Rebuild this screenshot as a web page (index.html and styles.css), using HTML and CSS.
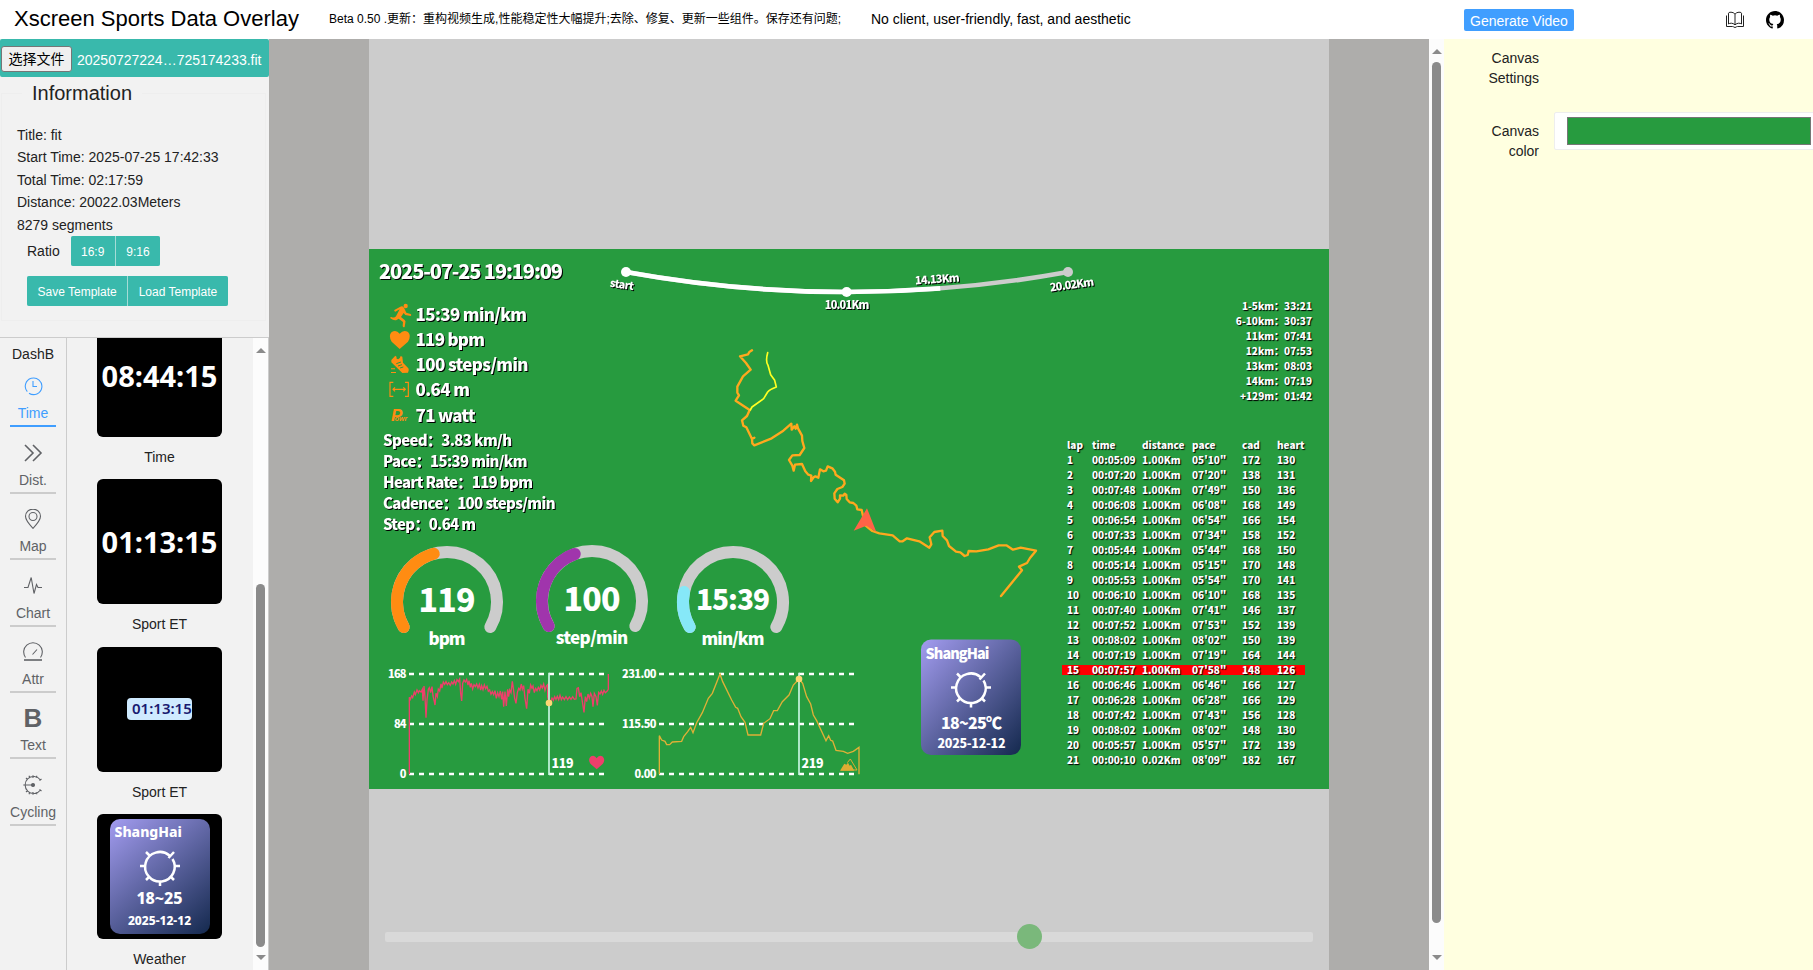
FILE: index.html
```html
<!DOCTYPE html>
<html lang="zh">
<head>
<meta charset="utf-8">
<title>Xscreen Sports Data Overlay</title>
<link rel="stylesheet" href="styles.css">
</head>
<body>
<header class="topbar">
  <h1 class="brand">Xscreen Sports Data Overlay</h1>
  <span class="beta">Beta 0.50 .更新：重构视频生成,性能稳定性大幅提升;去除、修复、更新一些组件。保存还有问题;</span>
  <span class="tagline">No client, user-friendly, fast, and aesthetic</span>
  <button class="generate">Generate Video</button>
  <svg class="book" viewBox="0 0 20 18" width="20" height="18" fill="none" stroke="#222" stroke-width="1"><path d="M10 3.2Q8.5 1.2 6 1.2T3.500 2.200V13Q4.500 12.200 6.300 12.200T10 13.800Q11.900 12.200 13.700 12.200T16.500 13V2.200Q16.500 1.200 14 1.200T10 3.200V13.800M1.500 4.500V15.500H7.500Q8.500 15.500 9 16.300H11Q11.500 15.500 12.500 15.500H18.500V4.500"/></svg>
  <svg class="github" viewBox="0 0 16 16" width="18" height="18"><path d="M8 0C3.580 0 0 3.580 0 8c0 3.540 2.290 6.530 5.470 7.590.4.070.55-.17.55-.38 0-.19-.010-.82-.010-1.490-2.010.37-2.530-.49-2.690-.94-.090-.23-.48-.94-.82-1.130-.28-.15-.68-.52-.010-.53.63-.010 1.080.58 1.230.82.72 1.210 1.870.87 2.330.66.070-.52.28-.87.51-1.070-1.780-.2-3.640-.89-3.640-3.950 0-.87.31-1.590.82-2.150-.080-.2-.36-1.020.080-2.120 0 0 .67-.21 2.200.82a7.600 7.600 0 0 1 4 0c1.530-1.040 2.200-.82 2.200-.82.44 1.100.16 1.920.080 2.120.51.56.82 1.270.82 2.150 0 3.070-1.870 3.750-3.650 3.950.29.25.54.73.54 1.480 0 1.070-.010 1.930-.010 2.200 0 .21.15.46.55.38A8.010 8.010 0 0 0 16 8c0-4.420-3.580-8-8-8z"/></svg>
</header>
<main class="workspace">
  <aside class="left">
    <div class="file-row"><span class="file-btn">选择文件</span><span class="file-name">20250727224…725174233.fit</span></div>
    <fieldset class="info">
      <legend>Information</legend>
      <p>Title: fit</p>
      <p>Start Time: 2025-07-25 17:42:33</p>
      <p>Total Time: 02:17:59</p>
      <p>Distance: 20022.03Meters</p>
      <p>8279 segments</p>
      <div class="btn-row ratio"><span>Ratio</span><div class="btns"><button>16:9</button><button>9:16</button></div></div>
      <div class="btn-row"><div class="btns"><button>Save Template</button><button>Load Template</button></div></div>
    </fieldset>
    <div class="library">
      <nav class="tabs">
        <div class="dash">DashB</div>
        <a class="tab active"><svg viewBox="0 0 20 20" width="20" height="20"><path d="M4.300 15.700A8.300 8.300 0 1 1 6 17.200M10 5V10.500H14"/></svg><span>Time</span></a>
        <a class="tab"><svg viewBox="0 0 20 20" width="20" height="20"><path class="thick" d="M2 2L10 10L2 18M10 2L18 10L10 18"/></svg><span>Dist.</span></a>
        <a class="tab"><svg viewBox="0 0 20 20" width="20" height="20"><path d="M10 19.300Q2.500 11.500 2.500 7.300A7.500 7.200 0 0 1 17.500 7.300Q17.500 11.500 10 19.300Z"/><circle cx="10" cy="7.500" r="4"/></svg><span>Map</span></a>
        <a class="tab"><svg viewBox="0 0 20 20" width="20" height="20"><path d="M1 11.500H5L8.200 1.500L11 17.500L13.500 8.500L15 11.500H19"/></svg><span>Chart</span></a>
        <a class="tab"><svg viewBox="0 0 20 20" width="20" height="20"><path d="M2.500 15.500A9.300 9.300 0 1 1 17.500 15.500M9.500 12.500L14 7.500"/><path class="thick" d="M1 18H19"/></svg><span>Attr</span></a>
        <a class="tab"><b>B</b><span>Text</span></a>
        <a class="tab"><svg viewBox="0 0 20 20" width="20" height="20"><path d="M17.500 5A8.500 8.500 0 1 0 17.500 15M3 10H10M10 .2V3M10 17V19.800M.3 10H3M3 3L4.500 4.500M3 17L4.500 15.500M6 .8L6.800 2.800M6 19.200L6.800 17.200M14 .8L13.200 2.800M14 19.200L13.200 17.200M18.500 4L16.500 5.500M18.500 16L16.500 14.500"/><circle class="dot" cx="10" cy="10" r="1.500"/></svg><span>Cycling</span></a>
      </nav>
      <div class="cards">
        <div class="thumb first"><b>08:44:15</b></div><div class="cap">Time</div>
        <div class="thumb"><b>01:13:15</b></div><div class="cap">Sport ET</div>
        <div class="thumb"><span class="chip">01:13:15</span></div><div class="cap">Sport ET</div>
        <div class="thumb">
          <div class="weather">
            <div class="city">ShangHai</div>
            <svg viewBox="0 0 40 40" width="40" height="40"><path d="M29.500 9.500A14.800 14.800 0 1 0 32.500 13M28.500 12L34 6M20 35V40M0 20H5M35 20H40M6 6L9.500 9.500M6 34L9.500 30.500M34 34L30.500 30.500"/></svg>
            <div class="deg">18~25</div><div class="date">2025-12-12</div>
          </div>
        </div><div class="cap">Weather</div>
      </div>
      <div class="scroll small"><i class="up"></i><i class="bar"></i><i class="down"></i></div>
    </div>
  </aside>
  <section class="stage">
    <div class="board">
      <div class="canvas">
        <svg class="scene" viewBox="0 0 960 540" width="960" height="540">
          <defs><linearGradient id="wx" x1="0" y1="0" x2="1" y2="1"><stop offset="0" stop-color="#a39cf0"/><stop offset="1" stop-color="#14294e"/></linearGradient></defs>
          <g class="shadow">
            <text x="10" y="30" font-size="20" textLength="184">2025-07-25 19:19:09</text>
            <g font-size="17">
              <text x="46.500" y="72" textLength="111.500">15:39 min/km</text>
              <text x="46.500" y="97" textLength="69.500">119 bpm</text>
              <text x="46.500" y="122" textLength="113">100 steps/min</text>
              <text x="46.500" y="147" textLength="54.500">0.64 m</text>
              <text x="46.500" y="173" textLength="60">71 watt</text>
            </g>
            <g font-size="15">
              <text x="14" y="197" textLength="129">Speed：3.83 km/h</text>
              <text x="14" y="218" textLength="144.500">Pace：15:39 min/km</text>
              <text x="14" y="239" textLength="150">Heart Rate：119 bpm</text>
              <text x="14" y="260" textLength="172.500">Cadence：100 steps/min</text>
              <text x="14" y="281" textLength="93">Step：0.64 m</text>
            </g>
          </g>
          <!-- metric icons -->
          <g fill="#ff8c12">
            <g transform="translate(-4 -9) scale(.33333)">
              <circle cx="122" cy="198" r="6.500"/>
              <path d="M88 210L106 200Q112 197 117 203L124 218L137 222Q141 225 137 228L121 225L116 219L108 231L119 240Q123 244 121 248L119 261Q114 264 113 258L114 246L101 236L96 239Q89 244 76 235Q74 231 79 231Q88 235 93 229L104 208L91 215Q86 214 88 210Z"/>
              <path d="M104 327L80 305Q69 287 80 276Q94 268 104 281Q115 268 129 276Q140 287 129 305Z"/>
              <path d="M79 360L91 347Q96 349 95 356Q104 361 107 348L112 350L114 368L130 385Q134 392 129 398L112 399L79 367ZM78 385H90V388H78ZM78 396H93V399H78Z"/>
              <path class="cut" d="M94 371L108 366M99 378L111 374M105 384L115 381"/>
              <path class="line" d="M85 427H75V469H85M120 427H130V469H120M84 448H121M90 442L84 448L90 454M115 442L121 448L115 454"/>
            </g>
            <text class="power" x="22" y="172" font-size="17">P<tspan font-size="7" dx="-7.500">owr</tspan></text>
          </g>
          <!-- distance progress -->
          <g transform="translate(231 -9) scale(.33333)" fill="none" stroke-width="14">
            <path stroke="#ccc" d="M78 96Q740 216 1404 96"/>
            <path stroke="#fff" pathLength="100" stroke-dasharray="71 100" d="M78 96Q740 216 1404 96"/>
            <g stroke="none"><circle cx="78" cy="96" r="15" fill="#fff"/><circle cx="740" cy="156" r="15" fill="#fff"/><circle cx="1404" cy="96" r="15" fill="#ccc"/></g>
          </g>
          <g class="shadow" font-size="11" text-anchor="middle">
            <text transform="translate(252.500 39.500) rotate(8)" textLength="24">start</text>
            <text x="478" y="59.500" textLength="44.500">10.01Km</text>
            <text transform="translate(568.500 34) rotate(-4)" textLength="44.500">14.13Km</text>
            <text transform="translate(703.500 39.500) rotate(-8)" textLength="44.500">20.02Km</text>
          </g>
          <!-- track -->
          <g transform="translate(331 81) scale(.33333)" fill="none" stroke-linejoin="round" stroke-linecap="round">
            <path stroke="#ffa81e" stroke-width="7" d="M156 61L148 66L144 73L120 79L138 99L152 119L129 139L112 170L112 188L117 196L107 212L149 240L141 258L126 271L130 287L139 292L156 327L163 323L156 327L157 340L163 346L215 325L250 302L274 281L275 299L283 289L287 296L291 284L294 295L306 317L307 333L313 354L299 375L277 376L267 390L277 407L281 422L285 404L306 402L316 424L325 434L334 437L333 453L341 442L346 439L355 443L360 418L370 424L378 422L383 409L397 415L405 425L407 434L432 451L434 461L427 471L412 477L403 490L404 506L413 517L420 506L420 496L430 497L434 491L439 495L440 507L449 517L460 519L469 527L472 538L485 540L495 585L517 603L538 610L578 616L599 634L608 634L621 625L658 634L688 653L694 643L689 622L703 606L727 602L728 618L741 631L747 648L768 665L781 667L794 678L803 675L806 663L829 664L865 658L896 646L919 646L939 659L962 653L1008 662L990 684L981 699L957 710L966 721L903 798"/>
            <path stroke="#ffff22" stroke-width="5" d="M203 68Q196 94 204 106L212 134L224 151L229 171Q210 178 203 186L191 206L156 231L151 240"/>
            <path fill="#ff6347" d="M501 535L529 606L499 587L461 602Z"/>
          </g>
          <!-- gauges -->
          <g fill="none" stroke-width="12" stroke-linecap="round">
            <g transform="translate(78 353)"><path stroke="#ccc" d="M-43.300 25A50 50 0 1 1 43.300 25"/><path stroke="#ff8c12" d="M-43.300 25A50 50 0 0 1 -13.300 -48.200"/></g>
            <g transform="translate(223 352)"><path stroke="#ccc" d="M-43.300 25A50 50 0 1 1 43.300 25"/><path stroke="#a035ac" d="M-43.300 25A50 50 0 0 1 -17.200 -47"/></g>
            <g transform="translate(364 353)"><path stroke="#ccc" d="M-43.300 25A50 50 0 1 1 43.300 25"/><path stroke="#86e8f8" d="M-43.300 25A50 50 0 0 1 -49 -10"/></g>
          </g>
          <g text-anchor="middle">
            <text x="78" y="362.500" font-size="32" textLength="57">119</text><text x="223" y="361.500" font-size="32" textLength="57">100</text><text x="364" y="361" font-size="28" textLength="74">15:39</text>
            <text x="78" y="396" font-size="17" textLength="37">bpm</text><text x="223" y="395" font-size="17" textLength="72.500">step/min</text><text x="364" y="396" font-size="17" textLength="63">min/km</text>
          </g>
          <!-- charts -->
          <path class="dash-line" d="M40 425H237M40 475H237M40 525H237M290 425H487M290 475H487M290 525H487"/>
          <g font-size="11" text-anchor="end">
            <text x="37.500" y="429" textLength="18.500">168</text><text x="37.500" y="479" textLength="12.500">84</text><text x="37.500" y="529">0</text>
            <text x="287.500" y="429" textLength="34.500">231.00</text><text x="287.500" y="479" textLength="34.500">115.50</text><text x="287.500" y="529" textLength="22">0.00</text>
          </g>
          <g transform="translate(-4 281) scale(.33333)" fill="none" stroke-width="4">
            <path stroke="#ee3f6b" d="M133 733V502L136 508L140 498L143 503L148 486L151 494L156 480L160 488L163 482L168 486L172 478L174 512L177 468L180 500L183 563L186 510L190 478L193 473L197 488L201 470L204 498L208 515L210 525L213 490L217 500L220 477L224 483L228 462L231 474L235 456L239 463L243 455L247 464L251 458L256 466L260 456L264 462L268 452L272 463L276 449L280 455L284 447L287 490L290 513L293 460L297 450L301 456L305 448L309 465L312 452L316 472L319 460L323 477L327 464L331 470L335 462L339 474L343 463L347 480L350 467L354 479L358 465L362 476L366 469L370 484L374 480L378 493L382 485L386 494L390 482L394 505L398 488L402 500L406 483L410 508L413 485L416 530L420 485L424 528L428 478L431 500L434 480L438 488L442 454L445 475L449 505L453 520L457 488L461 475L465 480L469 462L472 478L476 467L480 505L485 536L489 478L493 490L497 465L501 475L504 468L508 488L512 475L516 482L520 472L524 480L528 466L532 474L536 462L540 481L544 468L548 464V500L552 519L557 514L561 504L565 511L569 500L573 508L577 499L581 509L585 496L589 509L593 501L598 509L603 500L608 509L613 501L618 508L623 500L628 508L633 507L636 475L640 473L644 500L648 488L652 515L657 547L661 500L665 515L669 492L673 505L677 490L681 500L684 530L688 490L693 500L697 526L701 487L705 492L709 483L713 493L717 481L721 488L726 484L730 478V432"/>
            <path stroke="#dfb037" d="M883 733V617L890 630L900 634L905 644H914L922 636L950 634L956 620L968 605L977 592L984 608L995 578L1012 548L1030 505L1042 490L1065 432L1073 455L1100 510L1112 532L1118 535L1128 560L1140 577L1149 615H1187L1196 580L1215 566L1226 542H1237L1252 515L1272 495L1285 465L1302 447L1313 460L1325 500L1337 522L1345 555L1355 572L1383 632L1391 617L1397 631L1403 633L1413 661L1435 664L1448 670L1465 664L1482 652V733"/>
            <path stroke="#c9f7e2" stroke-width="5" d="M552 428V735M1302 428V735"/>
            <g stroke="none"><circle cx="552" cy="519" r="10" fill="#fcd774"/><circle cx="1302" cy="447" r="10" fill="#fcd774"/>
            <path fill="#ee3f6b" d="M695 718L677 702Q667 688 678 679Q689 674 695 685Q701 674 712 679Q723 688 713 702Z"/>
            <path fill="#dfac33" d="M1425 722L1438 701L1444 704L1449 698L1454 707L1458 704L1468 722Z"/></g>
            <path stroke="#dfac33" stroke-width="3" d="M1447 698L1456 687L1476 720H1428"/>
          </g>
          <text x="182.500" y="518.500" font-size="12.500" textLength="22">119</text><text x="432.500" y="518.500" font-size="12.500" textLength="22">219</text>
          <!-- weather card -->
          <rect x="552" y="390.500" width="100" height="115.500" rx="10" fill="url(#wx)"/>
          <path class="sun" transform="translate(582 418.500)" d="M29.500 9.500A14.800 14.800 0 1 0 32.500 13M28.500 12L34 6M20 35V40M0 20H5M35 20H40M6 6L9.500 9.500M6 34L9.500 30.500M34 34L30.500 30.500"/>
          <text x="556.500" y="410" font-size="14.500" textLength="64">ShangHai</text>
          <g text-anchor="middle"><text x="602.500" y="480" font-size="16" textLength="61">18~25℃</text><text x="602.500" y="499" font-size="12.500" textLength="68">2025-12-12</text></g>
        </svg>
        <div class="splits"><div>1-5km：33:21</div><div>6-10km：30:37</div><div>11km：07:41</div><div>12km：07:53</div><div>13km：08:03</div><div>14km：07:19</div><div>+129m：01:42</div></div>
        <div class="laps" id="laps"></div>
      </div>
      <div class="slider"><i></i></div>
    </div>
    <div class="scroll"><i class="up"></i><i class="bar"></i><i class="down"></i></div>
  </section>
  <aside class="right">
    <div class="field"><label>Canvas Settings</label></div>
    <div class="field"><label>Canvas color</label><div class="picker"><i></i></div></div>
  </aside>
</main>
<script src="laps.js"></script>
</body>
</html>
```
FILE: laps.js
```javascript
const laps = `lap|time|distance|pace|cad|heart
1|00:05:09|1.00Km|05'10"|172|130
2|00:07:20|1.00Km|07'20"|138|131
3|00:07:48|1.00Km|07'49"|150|136
4|00:06:08|1.00Km|06'08"|168|149
5|00:06:54|1.00Km|06'54"|166|154
6|00:07:33|1.00Km|07'34"|158|152
7|00:05:44|1.00Km|05'44"|168|150
8|00:05:14|1.00Km|05'15"|170|148
9|00:05:53|1.00Km|05'54"|170|141
10|00:06:10|1.00Km|06'10"|168|135
11|00:07:40|1.00Km|07'41"|146|137
12|00:07:52|1.00Km|07'53"|152|139
13|00:08:02|1.00Km|08'02"|150|139
14|00:07:19|1.00Km|07'19"|164|144
15|00:07:57|1.00Km|07'58"|148|126
16|00:06:46|1.00Km|06'46"|166|127
17|00:06:28|1.00Km|06'28"|166|129
18|00:07:42|1.00Km|07'43"|156|128
19|00:08:02|1.00Km|08'02"|148|130
20|00:05:57|1.00Km|05'57"|172|139
21|00:00:10|0.02Km|08'09"|182|167`;
const box = document.getElementById('laps');
laps.split('\n').forEach((line) => {
  const row = document.createElement('div');
  const cells = line.split('|');
  row.className = cells[0] === '15' ? 'lap current' : 'lap';
  cells.forEach((c) => {
    const s = document.createElement('span');
    s.textContent = c;
    row.appendChild(s);
  });
  box.appendChild(row);
});
```
FILE: styles.css
```css
* { box-sizing: border-box; }
body { margin: 0; height: 970px; display: flex; flex-direction: column; overflow: hidden; font: 14px/22.4px "Liberation Sans", "Noto Sans CJK SC", sans-serif; color: #222; background: #fff; }
h1, p { margin: 0; font-weight: 400; }
button { font-family: inherit; border: 0; padding: 0; }
.topbar { height: 39px; flex: none; display: flex; align-items: center; padding-left: 14px; color: #000; }
.brand { font-size: 22px; line-height: 37px; width: 315px; height: 39px; white-space: nowrap; }
.beta { font-size: 12px; width: 542px; white-space: nowrap; line-height: 38px; height: 39px; }
.tagline { width: 593px; line-height: 38px; height: 39px; white-space: nowrap; }
.generate { width: 110px; height: 22px; margin-top: 1px; border-radius: 2px; background: #409eff; color: #fff; font-size: 14px; line-height: 24px; }
.book { margin-left: 151px; }
.github { margin-left: 21px; }
.workspace { flex: 1; min-height: 0; display: flex; }
.left { width: 269px; flex: none; background: #f2f2f2; display: flex; flex-direction: column; }
.file-row { height: 38px; flex: none; background: #39b9ac; border-radius: 2px; display: flex; align-items: center; padding-left: 1px; gap: 5px; color: #fff; }
.file-btn { width: 71px; height: 26px; margin-top: 1px; border: 1px solid #767676; border-radius: 3px; background: #efefef; color: #000; text-align: center; line-height: 25px; }
.file-name { padding-top: 4px; white-space: nowrap; }
.info { height: 238px; width: 265px; margin: 6px 0 0 1px; padding: 0 15px; border: 1px solid #eee; flex: none; }
.info legend { font-size: 20px; line-height: 20px; padding: 0 10px; margin: 0 0 0 5px; }
.info p:first-of-type { margin-top: 21px; }
.btn-row { display: flex; padding-left: 10px; margin-top: 9px; }
.ratio { margin-top: -1px; }
.ratio span { line-height: 32px; width: 43.500px; }
.btns { display: flex; gap: 1px; background: #a5dcd6; border-radius: 2px; overflow: hidden; height: 30px; }
.btns button { height: 30px; padding: 0 10.500px; background: #39b9ac; color: #fff; font-size: 12px; line-height: 32px; }
.ratio .btns { margin-top: 1px; }
.ratio + .btn-row { margin-top: 9px; }
.library { flex: none; height: 633px; margin-top: 16px; border-top: 1px solid #ccc; border-right: 1px solid #ccc; display: flex; overflow: hidden; }
.tabs { width: 67px; flex: none; border-right: 1px solid #ccc; display: flex; flex-direction: column; align-items: center; }
.dash { line-height: 22px; padding-top: 5px; height: 23px; }
.tab { width: 46px; height: 66.400px; flex: none; border-bottom: 2px solid #ccc; display: flex; flex-direction: column; align-items: center; justify-content: flex-end; color: #606266; white-space: nowrap; }
.tab svg { fill: none; stroke: currentColor; stroke-width: 1.100; margin-bottom: 7px; }
.tab .thick { stroke-width: 1.600; }
.tab .dot { fill: currentColor; }
.tab b { font-size: 26px; line-height: 24px; margin-bottom: 5px; }
.tab span { height: 22px; line-height: 20px; }
.tab.active { color: #409eff; border-color: #409eff; }
.cards { width: 186px; display: flex; flex-direction: column; align-items: center; margin-top: -26px; flex: none; padding-right: 1px; }
.thumb { width: 125px; height: 125px; flex: none; border-radius: 6px; background: #000; color: #fff; display: flex; align-items: center; justify-content: center; font-family: "Noto Sans", sans-serif; }
.thumb > b { font-size: 29px; }
.first > b { margin-top: 4px; }
.cap { height: 42.300px; flex: none; line-height: 40px; }
.chip { width: 65px; height: 22px; border-radius: 4px; background: #cfeaff; color: #191970; font-weight: 600; line-height: 21px; padding-left: 5px; font-size: 15px; white-space: nowrap; overflow: hidden; }
.weather { width: 100px; height: 115px; border-radius: 10px; background: linear-gradient(139deg, #a39cf0, #14294e); text-align: center; font-weight: 800; }
.city { font-size: 14px; text-align: left; padding: 4px 0 0 5px; line-height: 18px; height: 27px; }
.weather svg { display: block; margin: 0 auto; fill: none; stroke: #fff; stroke-width: 2.500; }
.deg { font-size: 16px; line-height: 24px; }
.date { font-size: 12px; line-height: 22px; }
.scroll { width: 15px; flex: none; background: #fcfcfc; display: flex; flex-direction: column; align-items: center; padding: 10px 0 10px; }
.scroll.small { padding-bottom: 10px; }
.up, .down { border: 5px solid transparent; width: 0; }
.up { border-bottom-color: #8b8b8b; border-top: 0; }
.down { border-top-color: #8b8b8b; border-bottom: 0; }
.scroll .bar { width: 9px; height: 861px; margin: 8px 0 auto; border-radius: 5px; background: #8b8b8b; }
.scroll.small .bar { height: 363px; margin-top: 231px; }
.stage { width: 1175px; flex: none; background: #aeadab; display: flex; }
.board { width: 960px; margin: 0 100px; background: #ccc; padding-top: 210px; }
.canvas { height: 540px; background: #279b3f; position: relative; font-family: "Noto Sans CJK SC", sans-serif; font-weight: 900; color: #fff; }
.scene { display: block; fill: #fff; }
.shadow { filter: drop-shadow(1px 1px .5px #000); }
.cut { fill: none; stroke: #279b3f; stroke-width: 3; }
.line { fill: none; stroke: #ff8c12; stroke-width: 3.500; }
.power { font-family: "Liberation Sans", sans-serif; font-style: italic; font-weight: 700; }
.dash-line { stroke: #fff; stroke-width: 2.300; stroke-dasharray: 5 5; }
.sun { fill: none; stroke: #fff; stroke-width: 2.500; }
.splits, .laps { position: absolute; font-size: 10px; line-height: 15px; text-shadow: 1px 1px 1px #000; }
.splits { right: 17px; top: 49px; text-align: right; }
.laps { left: 693px; top: 188px; width: 243px; }
.lap { display: grid; grid-template-columns: 25px 50px 50px 50px 35px 28px; padding-left: 5px; height: 15px; white-space: nowrap; }
.current { background: linear-gradient(red, red) 0 3px / 100% 10px no-repeat; }
.slider { width: 928px; height: 10px; margin: 143px auto 0; background: #d9d9d9; border-radius: 2px; position: relative; }
.slider i { position: absolute; left: 632px; top: -8px; width: 25px; height: 25px; border-radius: 50%; background: #7ab87b; }
.right { flex: 1; background: #ffffe0; padding-top: 9px; overflow: hidden; }
.field { display: flex; height: 73px; line-height: 20px; }
.field label { width: 95px; padding-left: 35px; text-align: right; flex: none; }
.picker { width: 280px; flex: none; height: 38px; margin: -9px 0 0 15px; border: 1px solid #eee; border-radius: 2px; background: #fff; padding: 4px 0 0 12px; }
.picker i { display: block; width: 244px; height: 28px; background: #279b3f; border: 1px solid #767676; }
```
